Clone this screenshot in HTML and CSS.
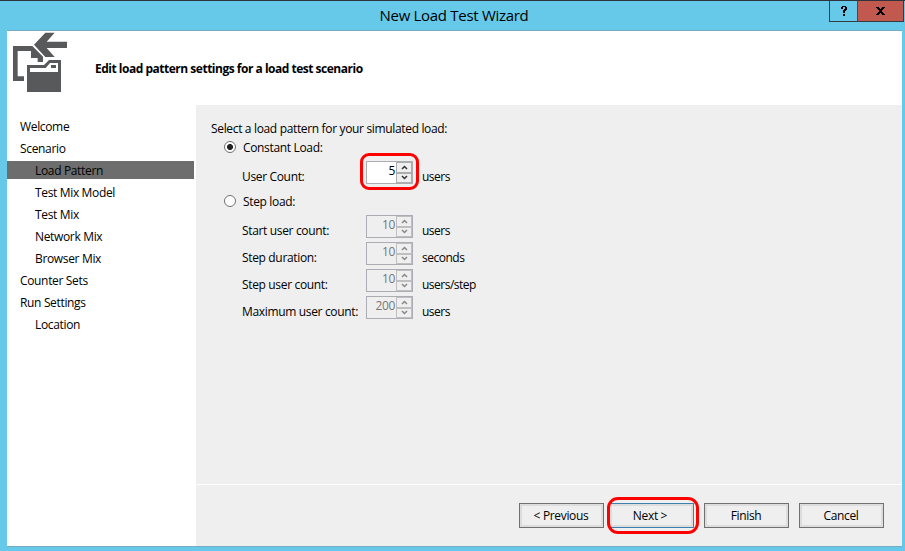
FILE: index.html
```html
<!DOCTYPE html>
<html lang="en">
<head>
<meta charset="utf-8">
<title>New Load Test Wizard</title>
<link rel="stylesheet" href="styles.css">
</head>
<body>
<div class="window">
  <header class="titlebar">
    <h1 class="title">New Load Test Wizard</h1>
    <div class="controls">
      <div class="control help"><svg width="6" height="10" viewBox="0 0 6 10" shape-rendering="crispEdges"><path d="M1 0h4v1h1v3h-1v1h-1v2h-2v-3h1v-1h1v-2h-2v2h-2v-2h1zM2 8h2v2h-2z"/></svg></div>
      <div class="control close"><svg width="9" height="8" viewBox="0 0 9 8" shape-rendering="crispEdges"><path d="M0 0h3v1h1v1h1v-1h1v-1h3v1h-1v1h-1v1h-1v2h1v1h1v1h1v1h-3v-1h-1v-1h-1v1h-1v1h-3v-1h1v-1h1v-1h1v-2h-1v-1h-1v-1h-1z"/></svg></div>
    </div>
  </header>
  <main class="client">
    <div class="banner">
      <svg class="logo" width="56" height="62" viewBox="36 93 168 186">
        <path d="M102 134L136 98H164L140 125H201V144H140L164 171H136Z"/>
        <path d="M39 138H97L129 170V186H113V174H93V153H53V229H72V243H39Z"/>
        <path fill-rule="evenodd" d="M81 195H132L147 180H183V276H81ZM90 204V216H174V189H150L137 204ZM153 195H168V204H153Z"/>
      </svg>
      <h2 class="heading">Edit load pattern settings for a load test scenario</h2>
    </div>
    <div class="body">
      <nav class="steps">
        <div class="step">Welcome</div>
        <div class="step">Scenario</div>
        <div class="step sub current">Load Pattern</div>
        <div class="step sub">Test Mix Model</div>
        <div class="step sub">Test Mix</div>
        <div class="step sub">Network Mix</div>
        <div class="step sub">Browser Mix</div>
        <div class="step">Counter Sets</div>
        <div class="step">Run Settings</div>
        <div class="step sub">Location</div>
      </nav>
      <section class="panel">
        <div class="form">
          <p class="intro">Select a load pattern for your simulated load:</p>
          <div class="choice"><span class="radio on"></span><span>Constant Load:</span></div>
          <div class="field">
            <span class="label">User Count:</span>
            <div class="spinner marked"><span class="value">5</span><span class="arrows"><i class="arrow"><svg width="7" height="5" viewBox="0 0 7 5"><path d="M1 4L3.5 1.5L6 4"/></svg></i><i class="arrow"><svg width="7" height="5" viewBox="0 0 7 5"><path d="M1 1L3.5 3.5L6 1"/></svg></i></span></div>
            <span class="unit">users</span>
          </div>
          <div class="choice second"><span class="radio"></span><span>Step load:</span></div>
          <div class="field">
            <span class="label">Start user count:</span>
            <div class="spinner off"><span class="value">10</span><span class="arrows"><i class="arrow"><svg width="7" height="5" viewBox="0 0 7 5"><path d="M1 4L3.5 1.5L6 4"/></svg></i><i class="arrow"><svg width="7" height="5" viewBox="0 0 7 5"><path d="M1 1L3.5 3.5L6 1"/></svg></i></span></div>
            <span class="unit">users</span>
          </div>
          <div class="field">
            <span class="label">Step duration:</span>
            <div class="spinner off"><span class="value">10</span><span class="arrows"><i class="arrow"><svg width="7" height="5" viewBox="0 0 7 5"><path d="M1 4L3.5 1.5L6 4"/></svg></i><i class="arrow"><svg width="7" height="5" viewBox="0 0 7 5"><path d="M1 1L3.5 3.5L6 1"/></svg></i></span></div>
            <span class="unit">seconds</span>
          </div>
          <div class="field">
            <span class="label">Step user count:</span>
            <div class="spinner off"><span class="value">10</span><span class="arrows"><i class="arrow"><svg width="7" height="5" viewBox="0 0 7 5"><path d="M1 4L3.5 1.5L6 4"/></svg></i><i class="arrow"><svg width="7" height="5" viewBox="0 0 7 5"><path d="M1 1L3.5 3.5L6 1"/></svg></i></span></div>
            <span class="unit">users/step</span>
          </div>
          <div class="field">
            <span class="label">Maximum user count:</span>
            <div class="spinner off"><span class="value">200</span><span class="arrows"><i class="arrow"><svg width="7" height="5" viewBox="0 0 7 5"><path d="M1 4L3.5 1.5L6 4"/></svg></i><i class="arrow"><svg width="7" height="5" viewBox="0 0 7 5"><path d="M1 1L3.5 3.5L6 1"/></svg></i></span></div>
            <span class="unit">users</span>
          </div>
        </div>
        <footer class="buttons">
          <button class="button">&lt; Previous</button>
          <button class="button next">Next &gt;</button>
          <button class="button finish">Finish</button>
          <button class="button">Cancel</button>
        </footer>
      </section>
    </div>
  </main>
</div>
</body>
</html>
```

FILE: styles.css
```css
* { box-sizing: border-box; }
body {
  margin: 0;
  font: 12px/18px "Open Sans", "Noto Sans", sans-serif;
  letter-spacing: -0.34px;
  color: #000;
}
h1, h2, p { margin: 0; }
.window {
  width: 905px;
  height: 551px;
  display: flex;
  flex-direction: column;
  background: #66c9e9;
  border-top: 1px solid #2f333b;
  padding: 0 3px 4px 7px;
}
.titlebar {
  flex: 0 0 29px;
  position: relative;
  text-align: center;
}
.title {
  font-size: 15px;
  font-weight: 400;
  line-height: 29px;
  letter-spacing: -0.3px;
  padding-right: 1px;
}
.controls {
  position: absolute;
  top: 0;
  right: -2px;
  display: flex;
  height: 21px;
  border: 1px solid #343c42;
  border-top: 0;
}
.control {
  display: flex;
  align-items: center;
  justify-content: center;
}
.help { width: 27px; padding-left: 1px; }
.close { width: 46px; background: #c2594f; border-left: 1px solid #6b3b3b; }
.client {
  height: 517px;
  display: flex;
  flex-direction: column;
  background: #fff;
  border-top: 1px solid #76adc5;
  border-bottom: 1px solid #76adc5;
}
.banner {
  flex: 0 0 74px;
  display: flex;
  align-items: flex-start;
  padding-left: 5px;
}
.logo { fill: #58595b; }
.heading {
  margin: 29px 0 0 27px;
  font-size: 12px;
  line-height: 18px;
  font-weight: 700;
  letter-spacing: -0.49px;
}
.body { flex: 1; display: flex; }
.steps {
  width: 189px;
  padding: 12px 2px 0 0;
  display: flex;
  flex-direction: column;
  gap: 4px;
}
.step { height: 18px; padding-left: 13px; line-height: 20px; }
.sub { padding-left: 28px; }
.current { background: #6d6d6d; }
.panel {
  flex: 1;
  display: flex;
  flex-direction: column;
  background: #efefef;
}
.form { flex: 1; padding: 15px 0 0 15px; }
.intro { height: 14px; line-height: 18px; }
.choice {
  height: 27px;
  display: flex;
  align-items: center;
  gap: 7px;
  padding-left: 13px;
}
.radio {
  width: 12px;
  height: 12px;
  margin-bottom: 1px;
  border: 1px solid #707070;
  border-radius: 50%;
  background: #fff;
}
.on { background: radial-gradient(circle, #222 0 2.6px, #fff 3.4px); }
.field {
  height: 27px;
  display: grid;
  grid-template-columns: 124px 47px 1fr;
  padding-left: 31px;
  align-items: start;
}
.label, .unit { line-height: 32px; }
.unit { padding-left: 9px; letter-spacing: -0.5px; }
.spinner {
  position: relative;
  width: 47px;
  height: 23px;
  display: flex;
  background: #fff;
  border: 1px solid #abadb3;
}
.value { flex: 1; text-align: right; line-height: 18px; padding-right: 1px; }
.arrows {
  width: 16px;
  height: 21px;
  display: flex;
  flex-direction: column;
}
.arrow {
  flex: 1;
  display: flex;
  align-items: center;
  justify-content: center;
  border: 1px solid #acacac;
  background: #efefef;
}
.arrow svg { fill: none; stroke: #333; stroke-width: 1.5; }
.off { background: #efefef; color: #777; }
.off .arrow { border-color: #bfbfbf; }
.off .arrow svg { stroke: #888; }
.marked::after, .next::after {
  content: "";
  position: absolute;
  border: 3px solid #fe0000;
}
.marked::after { inset: -9px -7px -7px; border-radius: 9px; }
.buttons {
  height: 62px;
  display: flex;
  justify-content: flex-end;
  align-items: flex-start;
  padding: 18px 18px 0 0;
  border-top: 1px solid #fff;
}
.button {
  position: relative;
  width: 85px;
  height: 25px;
  margin: 0 0 0 10px;
  padding: 0 1px 0 0;
  font: inherit;
  letter-spacing: inherit;
  color: #000;
  background: #efefef;
  border: 1px solid #707070;
  box-shadow: inset 0 0 0 2px #dddddd;
}
.next { margin-left: 5px; padding-right: 3px; border-color: #3c7fb1; }
.next::after { inset: -7px -6px -7px -3px; border-radius: 11px; }
```
